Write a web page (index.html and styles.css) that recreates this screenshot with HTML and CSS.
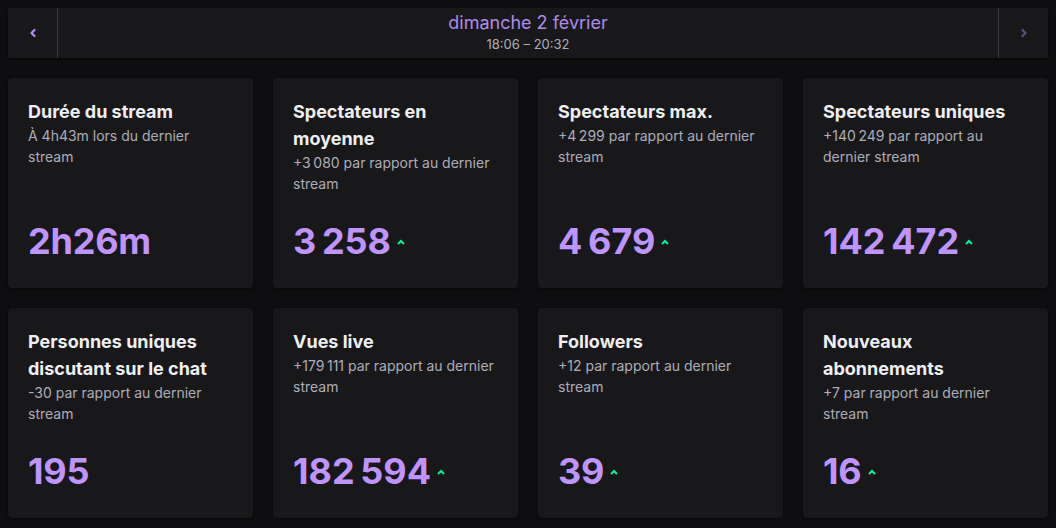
FILE: index.html
```html
<!DOCTYPE html>
<html lang="fr">
<head>
    <meta charset="UTF-8">
    <title>Statistiques du stream</title>
    <link rel="stylesheet" href="styles.css">
</head>
<body>
    <div class="day-nav">
        <button class="nav-btn nav-prev" aria-label="Précédent">
            <svg width="8" height="10" viewBox="0 0 8 10"><polyline points="5.5,2 2.5,5 5.5,8" fill="none" stroke="currentColor" stroke-width="2.2" stroke-linecap="round" stroke-linejoin="round"/></svg>
        </button>
        <div class="day-info">
            <div class="day-title">dimanche 2 février</div>
            <div class="day-time">18:06 – 20:32</div>
        </div>
        <button class="nav-btn nav-next" aria-label="Suivant">
            <svg width="8" height="10" viewBox="0 0 8 10"><polyline points="2.5,2 5.5,5 2.5,8" fill="none" stroke="currentColor" stroke-width="2.2" stroke-linecap="round" stroke-linejoin="round"/></svg>
        </button>
    </div>

    <div class="stats-grid" id="statsGrid"></div>

    <script>
        const stats = [
            { title: 'Durée du stream', sub: 'À 4h43m lors du dernier stream', value: '2h26m', up: false },
            { title: 'Spectateurs en moyenne', sub: '+3\u202F080 par rapport au dernier stream', value: '3\u202F258', up: true },
            { title: 'Spectateurs max.', sub: '+4\u202F299 par rapport au dernier stream', value: '4\u202F679', up: true },
            { title: 'Spectateurs uniques', sub: '+140\u202F249 par rapport au dernier stream', value: '142\u202F472', up: true },
            { title: 'Personnes uniques discutant sur le chat', sub: '-30 par rapport au dernier stream', value: '195', up: false },
            { title: 'Vues live', sub: '+179\u202F111 par rapport au dernier stream', value: '182\u202F594', up: true },
            { title: 'Followers', sub: '+12 par rapport au dernier stream', value: '39', up: true },
            { title: 'Nouveaux abonnements', sub: '+7 par rapport au dernier stream', value: '16', up: true }
        ];

        const caret = '<svg class="trend" width="8" height="6" viewBox="0 0 8 6"><polyline points="1,5 4,2 7,5" fill="none" stroke="currentColor" stroke-width="2"/></svg>';

        function renderStats() {
            const grid = document.getElementById('statsGrid');
            stats.forEach(stat => {
                const card = document.createElement('div');
                card.className = 'stat-card';
                card.innerHTML = `
                    <div class="stat-title">${stat.title}</div>
                    <div class="stat-sub">${stat.sub}</div>
                    <div class="stat-value">${stat.value}${stat.up ? caret : ''}</div>
                `;
                grid.appendChild(card);
            });
        }

        renderStats();
    </script>
</body>
</html>
```

FILE: styles.css
```css
body {
    margin: 0;
    padding: 8px;
    background-color: #0e0e10;
    font-family: Inter, "Noto Sans", sans-serif;
    color: #efeff1;
}

.day-nav {
    display: flex;
    height: 50px;
    background: #18181b;
    box-shadow: 0 1px 2px rgba(0,0,0,0.6);
}

.nav-btn {
    width: 50px;
    flex: none;
    background: none;
    border: none;
    padding: 0;
    display: flex;
    align-items: center;
    justify-content: center;
    cursor: pointer;
}

.nav-prev {
    border-right: 1px solid #3a3a3e;
    color: #b48cff;
}

.nav-next {
    border-left: 1px solid #3a3a3e;
    color: #5e4d84;
}

.day-info {
    flex: 1;
    display: flex;
    flex-direction: column;
    align-items: center;
    justify-content: center;
    padding-bottom: 2px;
}

.day-title {
    font-size: 18px;
    line-height: 24px;
    color: #b08ae8;
}

.day-time {
    font-size: 13px;
    line-height: 18px;
    color: #adadb8;
}

.stats-grid {
    margin-top: 20px;
    display: grid;
    grid-template-columns: repeat(4, 1fr);
    grid-auto-rows: 210px;
    gap: 20px;
}

.stat-card {
    background: #18181b;
    border-radius: 4px;
    padding: 20px;
    display: flex;
    flex-direction: column;
    box-shadow: 0 1px 3px rgba(0,0,0,0.5);
}

.stat-title {
    font-size: 18px;
    font-weight: 700;
    line-height: 1.5;
    color: #efeff1;
}

.stat-sub {
    font-size: 14px;
    line-height: 1.5;
    color: #adadb8;
}

.stat-value {
    margin-top: auto;
    display: flex;
    align-items: center;
    gap: 6px;
    font-size: 36px;
    font-weight: 700;
    letter-spacing: -0.2px;
    line-height: 1.5;
    color: #bf94ff;
}

.trend {
    color: #00f593;
    margin-top: 2px;
}
```
